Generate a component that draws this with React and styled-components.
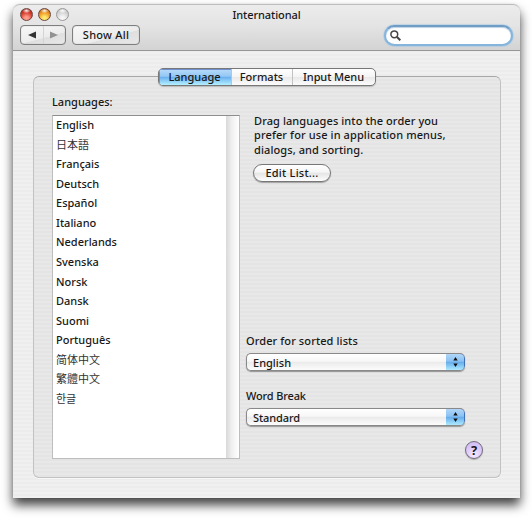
import React from "react";
import styled, { createGlobalStyle, css } from "styled-components";

const GlobalStyle = createGlobalStyle`
  * { box-sizing: border-box; }
  body { margin: 0; background: #fff; overflow: hidden; }
  button, input { font: inherit; color: inherit; letter-spacing: inherit; margin: 0; }
`;

const Desktop = styled.div`
  width: 532px;
  height: 520px;
  padding: 4px 12px 21px 13px;
  overflow: hidden;
  font: 500 11px/15px "Noto Sans", "Open Sans", "Noto Sans CJK JP", "Noto Sans CJK KR", sans-serif;
  letter-spacing: 0.1px;
  color: #181818;
`;

const Window = styled.main`
  width: 507px;
  height: 494px;
  display: flex;
  flex-direction: column;
  border-radius: 7px 7px 0 0;
  background: repeating-linear-gradient(#f0f0f0 0 2px, #ececec 2px 4px);
  box-shadow: 0 0 1px rgba(0, 0, 0, 0.3), 0 7px 11px rgba(0, 0, 0, 0.75);
  overflow: visible;
`;

const TitleBar = styled.header`
  height: 47px;
  flex: none;
  padding: 0 7px;
  border-top: 1px solid #bdbdbd;
  border-bottom: 1px solid #969696;
  border-radius: 7px 7px 0 0;
  background: linear-gradient(#ececec, #e4e4e4 45%, #d3d3d3);
`;

const TitleRow = styled.div`
  height: 20px;
  padding-bottom: 2px;
  display: grid;
  grid-template-columns: 60px 1fr 60px;
  align-items: center;
`;

const Lights = styled.div`
  display: flex;
  gap: 5px;
`;

const lights = {
  close: ["#8e1d14", "#d8402f", "#ff9d8c"],
  minimize: ["#a5510a", "#f09a26", "#ffe96f"],
  zoom: ["#b8b8b8", "#d6d6d6", "#f5f5f5"],
};

const Light = styled.button`
  width: 13px;
  height: 13px;
  padding: 0;
  border: 1px solid ${(p) => (p.$kind === "zoom" ? "#999" : "#6a4541")};
  border-radius: 50%;
  background:
    radial-gradient(ellipse 4px 2.5px at 50% 16%, rgba(255, 255, 255, 0.95), transparent),
    radial-gradient(circle at 50% 85%, ${(p) => lights[p.$kind][2]} 15%, ${(p) => lights[p.$kind][1]} 55%, ${(p) => lights[p.$kind][0]});
`;

const Title = styled.h1`
  margin: 0;
  text-align: center;
  font: inherit;
  letter-spacing: -0.08px;
`;

const ToolRow = styled.div`
  height: 20px;
  display: flex;
  align-items: flex-start;
`;

const toolButton = css`
  height: 20px;
  border: 1px solid #7f7f7f;
  border-radius: 4px;
  background: linear-gradient(165deg, #f8f8f8 0%, #ececec 60%, #dfdfdf 61%, #e8e8e8 100%);
  box-shadow: inset 0 0 1px #999;
`;

const Navigation = styled.div`
  ${toolButton}
  width: 46px;
  display: flex;
  margin-right: 6px;
`;

const NavButton = styled.button`
  flex: 1;
  display: flex;
  align-items: center;
  justify-content: center;
  padding: 0;
  border: 0;
  background: none;
  color: ${(p) => (p.disabled ? "#929292" : "#333")};
  & + & { border-left: 1px solid #d4d4d4; }
`;

const ShowAll = styled.button`
  ${toolButton}
  width: 68px;
  padding: 0;
  line-height: 16px;
  letter-spacing: 0.25px;
`;

const SearchField = styled.label`
  width: 129px;
  height: 21px;
  margin-left: auto;
  display: flex;
  align-items: center;
  padding-left: 4px;
  border: 2px solid #86b5dc;
  border-top-color: #6f9dc5;
  border-radius: 11px;
  background: #fff;
  box-shadow: 0 0 1px 0.5px #9fc5e4, inset 0 1px 1px #bdd2e4;
  input { width: 100px; height: 15px; padding: 0 4px; border: 0; outline: 0; background: none; }
`;

const Content = styled.section`
  flex: 1;
  padding: 17px 19px 0 20px;
  display: flex;
  flex-direction: column;
  align-items: center;
`;

const Tabs = styled.nav`
  display: flex;
  width: 218px;
  height: 18px;
  flex: none;
  z-index: 1;
  margin: 0 0 -10px -1px;
  border: 1px solid #777;
  border-radius: 5px;
  overflow: hidden;
  background: linear-gradient(#fff, #f4f4f4 48%, #e9e9e9 52%, #fbfbfb);
  box-shadow: 0 1px 1px rgba(0, 0, 0, 0.2);
`;

const Tab = styled.button`
  width: ${(p) => p.$width}px;
  flex: none;
  padding: 0 0 1px;
  border: 0;
  line-height: 15px;
  letter-spacing: ${(p) => p.$spacing}px;
  background: ${(p) => (p.$active ? "linear-gradient(#b9dbf8, #94c8f5 45%, #6cb1f0 52%, #b4efff)" : "none")};
  box-shadow: ${(p) => (p.$active ? "inset 0 1px #6f8fd0, inset 1px 0 #5c97dc" : "none")};
  & + & { border-left: 1px solid #c2c2c2; }
`;

const GroupBox = styled.div`
  width: 468px;
  height: 402px;
  flex: none;
  display: flex;
  padding: 18px 0 0 18px;
  border: 1px solid #c2c2c2;
  border-top-color: #a7a7a7;
  border-radius: 6px;
  background: repeating-linear-gradient(#e8e8e8 0 2px, #e4e4e4 2px 4px);
  box-shadow: 0 1px #f8f8f8;
`;

const LanguageColumn = styled.div`
  width: 188px;
`;

const Label = styled.div`
  height: 15px;
  line-height: ${(p) => p.$line ?? 14}px;
  white-space: nowrap;
  letter-spacing: ${(p) => p.$spacing}px;
`;

const ListFrame = styled.div`
  width: 188px;
  height: 344px;
  margin-top: 5px;
  display: flex;
  border: 1px solid #bdbdbd;
  border-top-color: #8e8e8e;
  background: #fff;
`;

const List = styled.ul`
  flex: 1;
  list-style: none;
  margin: 0;
  padding: 0 0 0 3px;
`;

const Item = styled.li`
  height: 19.57px;
  line-height: 18px;
  letter-spacing: 0;
  font-weight: ${(p) => (p.$cjk ? 400 : 500)};
  color: ${(p) => (p.$cjk ? "#333" : "inherit")};
  font-family: "Noto Sans", "${(p) => p.$cjk || "Noto Sans CJK JP"}", sans-serif;
`;

const ScrollGutter = styled.div`
  width: 13px;
  background: linear-gradient(90deg, #d9d9d9, #f0f0f0 45%, #fff);
`;

const Options = styled.div`
  width: 240px;
  display: flex;
  flex-direction: column;
  padding: 19px 0 0 6px;
`;

const Help = styled.p`
  margin: 0 0 0 8px;
  line-height: 14.4px;
  white-space: nowrap;
`;

const HelpLine = styled.span`
  display: block;
  letter-spacing: ${(p) => p.$spacing}px;
`;

const EditButton = styled.button`
  width: 78px;
  height: 18px;
  margin: 7px 0 0 7px;
  padding: 0 0 1px;
  border: 1px solid #777;
  border-radius: 9px;
  line-height: 15px;
  background: linear-gradient(#fff, #f5f5f5 45%, #e6e6e6 52%, #fdfdfd);
  box-shadow: 0 1px 1px rgba(0, 0, 0, 0.3);
  letter-spacing: 0.22px;
`;

const Field = styled.div`
  height: 55px;
  &:first-of-type { margin-top: 151px; }
`;

const Popup = styled.button`
  width: 219px;
  height: 18px;
  margin-top: 5px;
  padding: 0 0 0 6px;
  display: flex;
  align-items: stretch;
  justify-content: space-between;
  border: 1px solid #898989;
  border-right: 0;
  border-radius: 5px;
  overflow: hidden;
  line-height: 17px;
  background: linear-gradient(#fff, #f7f7f7 45%, #ebebeb 52%, #fcfcfc);
  box-shadow: 0 1px 1px rgba(0, 0, 0, 0.35);
  letter-spacing: ${(p) => p.$spacing}px;
`;

const Stepper = styled.span`
  width: 19px;
  margin: -1px 0;
  display: flex;
  align-items: center;
  justify-content: center;
  border: 1px solid #4071b6;
  border-top-color: #242e86;
  border-left: 0;
  border-radius: 0 5px 5px 0;
  background: linear-gradient(#b1d6f8, #8bc1f3 45%, #67adeb 52%, #adeaff);
`;

const HelpButton = styled.button`
  width: 18px;
  height: 18px;
  margin: -2px 0 0 219px;
  padding: 0;
  border: 1px solid #716a7d;
  border-radius: 50%;
  background: radial-gradient(circle at 50% 80%, #f8e9ff, #dccafa 50%, #cbb8f0);
  font: 700 13px/15px "Noto Sans", sans-serif;
  letter-spacing: 0;
  box-shadow: 0 1px 1px rgba(0, 0, 0, 0.25);
`;

const Triangle = ({ flip }) => (
  <svg width="8" height="8" viewBox="0 0 8 8">
    <path d={flip ? "M0 .5 8 4 0 7.5Z" : "M8 .5 0 4 8 7.5Z"} fill="currentColor" />
  </svg>
);

const Arrows = () => (
  <svg width="5" height="12" viewBox="0 0 5 12">
    <path d="M.3 4.5 2.5 1 4.7 4.5ZM.3 7.5h4.4L2.5 11Z" fill="#111" />
  </svg>
);

const SearchIcon = () => (
  <svg width="11" height="11" viewBox="0 0 11 11" fill="none" stroke="#444">
    <circle cx="4.3" cy="4.3" r="3.4" strokeWidth="1.5" />
    <path d="m6.8 6.8 3.5 3.5" strokeWidth="2" />
  </svg>
);

const languages = [
  ["English"], ["日本語", "Noto Sans CJK JP"], ["Français"], ["Deutsch"], ["Español"],
  ["Italiano"], ["Nederlands"], ["Svenska"], ["Norsk"], ["Dansk"], ["Suomi"],
  ["Português"], ["简体中文", "Noto Sans CJK SC"], ["繁體中文", "Noto Sans CJK TC"],
  ["한글", "Noto Sans CJK KR"],
];

const PopupField = ({ label, labelSpacing, value, spacing }) => (
  <Field>
    <Label $line={16} $spacing={labelSpacing}>{label}</Label>
    <Popup $spacing={spacing}>{value}<Stepper><Arrows /></Stepper></Popup>
  </Field>
);

export default function App() {
  return (
    <>
      <GlobalStyle />
      <Desktop>
        <Window>
          <TitleBar>
            <TitleRow>
              <Lights>
                <Light $kind="close" aria-label="Close" />
                <Light $kind="minimize" aria-label="Minimize" />
                <Light $kind="zoom" aria-label="Zoom" />
              </Lights>
              <Title>International</Title>
            </TitleRow>
            <ToolRow>
              <Navigation>
                <NavButton aria-label="Back"><Triangle /></NavButton>
                <NavButton aria-label="Forward" disabled><Triangle flip /></NavButton>
              </Navigation>
              <ShowAll>Show All</ShowAll>
              <SearchField><SearchIcon /><input aria-label="Search" /></SearchField>
            </ToolRow>
          </TitleBar>
          <Content>
            <Tabs>
              <Tab $active $width={72} $spacing={0}>Language</Tab>
              <Tab $width={61} $spacing={0}>Formats</Tab>
              <Tab $width={83} $spacing={-0.08}>Input Menu</Tab>
            </Tabs>
            <GroupBox>
              <LanguageColumn>
                <Label $spacing={0}>Languages:</Label>
                <ListFrame>
                  <List>
                    {languages.map(([name, font]) => <Item key={name} $cjk={font}>{name}</Item>)}
                  </List>
                  <ScrollGutter />
                </ListFrame>
              </LanguageColumn>
              <Options>
                <Help>
                  <HelpLine $spacing={0.09}>Drag languages into the order you</HelpLine>
                  <HelpLine $spacing={0.11}>prefer for use in application menus,</HelpLine>
                  <HelpLine $spacing={0.1}>dialogs, and sorting.</HelpLine>
                </Help>
                <EditButton>Edit List...</EditButton>
                <PopupField label="Order for sorted lists" labelSpacing={0.1} value="English" spacing={0} />
                <PopupField label="Word Break" labelSpacing={-0.15} value="Standard" spacing={-0.1} />
                <HelpButton aria-label="Help">?</HelpButton>
              </Options>
            </GroupBox>
          </Content>
        </Window>
      </Desktop>
    </>
  );
}
